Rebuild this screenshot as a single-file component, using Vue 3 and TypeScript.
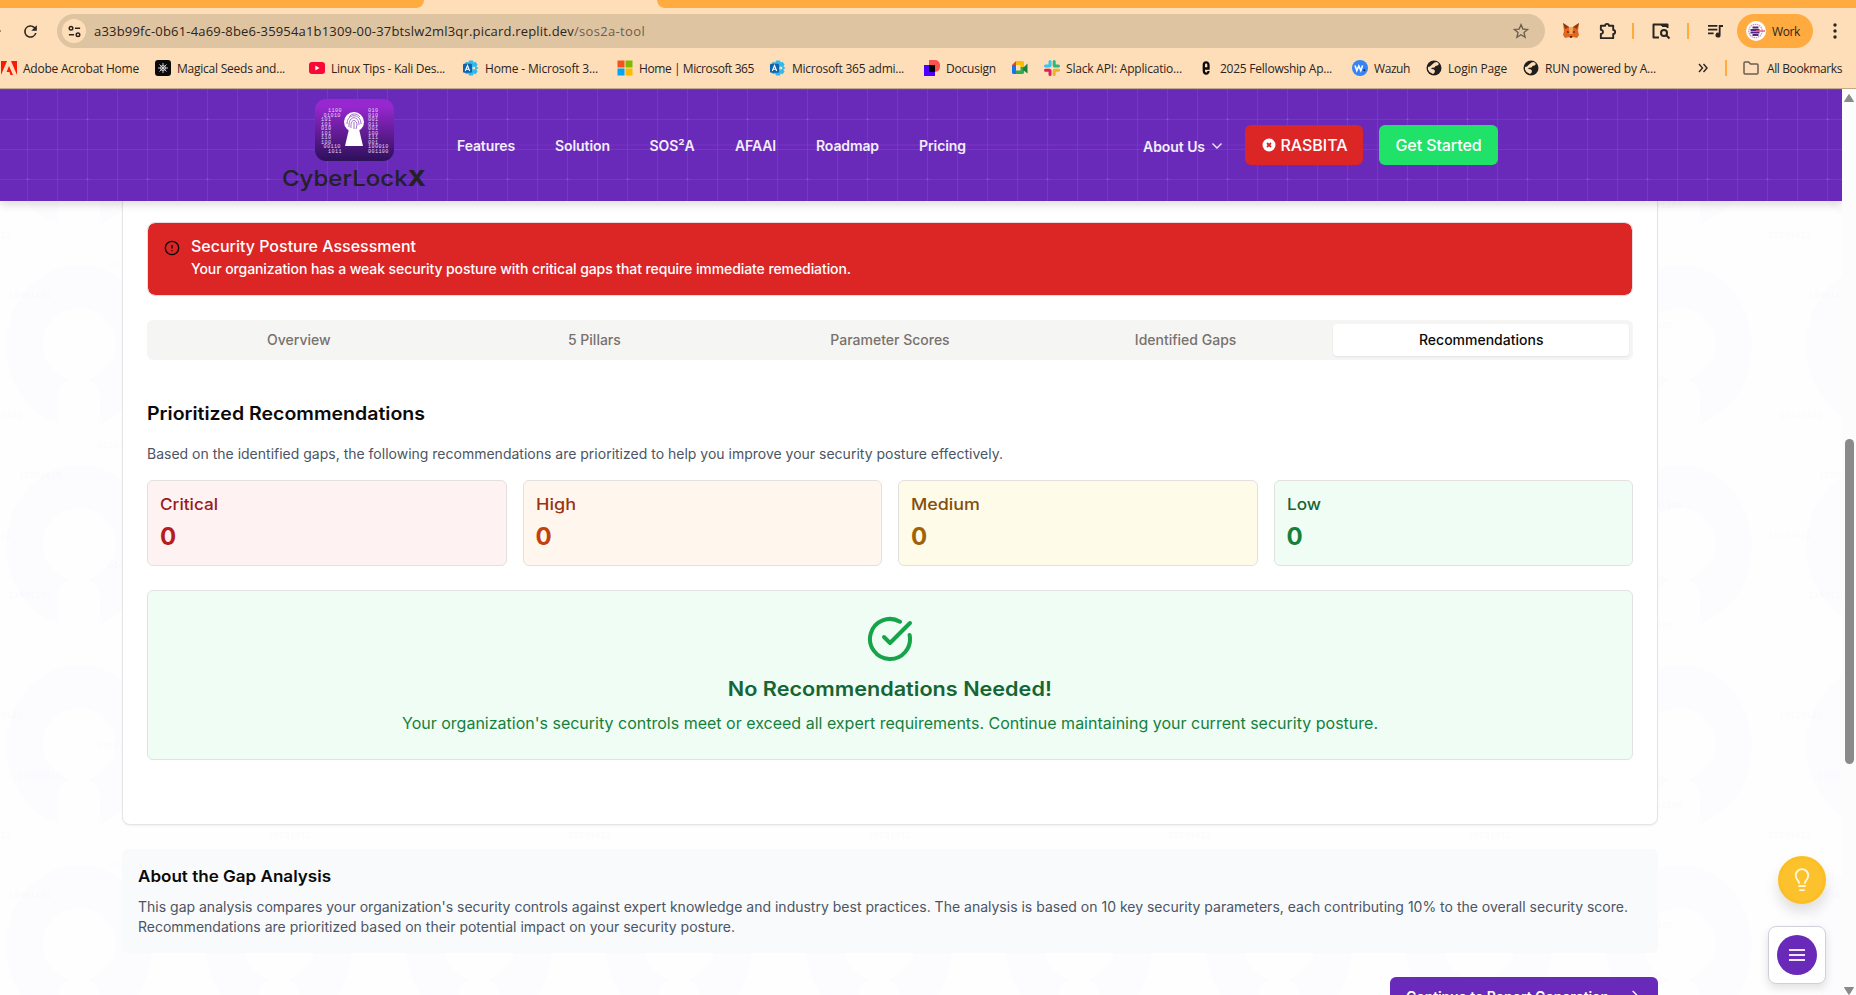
<script setup lang="ts">
import type { Directive } from 'vue'

interface Bookmark {
  icon: string
  label: string
  slot: number
  width: number
}

interface Severity {
  name: string
  count: number
  tone: string
  width: number
}

const bookmarks: Bookmark[] = [
  { icon: 'adobe', label: 'Adobe Acrobat Home', slot: 154, width: 116 },
  { icon: 'seed', label: 'Magical Seeds and...', slot: 154, width: 108 },
  { icon: 'youtube', label: 'Linux Tips - Kali Des...', slot: 154, width: 114 },
  { icon: 'admin', label: 'Home - Microsoft 3...', slot: 154, width: 113 },
  { icon: 'windows', label: 'Home | Microsoft 365', slot: 153, width: 115 },
  { icon: 'admin', label: 'Microsoft 365 admi...', slot: 154, width: 112 },
  { icon: 'docusign', label: 'Docusign', slot: 88, width: 50 },
  { icon: 'meet', label: '', slot: 32, width: 0 },
  { icon: 'slack', label: 'Slack API: Applicatio...', slot: 154, width: 116 },
  { icon: 'letter', label: '2025 Fellowship Ap...', slot: 154, width: 112 },
  { icon: 'wazuh', label: 'Wazuh', slot: 74, width: 36 },
  { icon: 'globe', label: 'Login Page', slot: 97, width: 59 },
  { icon: 'globe', label: 'RUN powered by A...', slot: 160, width: 111 },
]

const navLinks = [
  { label: 'Features', slot: 98, width: 58 },
  { label: 'Solution', slot: 94.5, width: 55 },
  { label: 'SOS²A', slot: 85.5, width: 45 },
  { label: 'AFAAI', slot: 81, width: 41 },
  { label: 'Roadmap', slot: 103, width: 63 },
  { label: 'Pricing', slot: 70, width: 47 },
]

const tabs = ['Overview', '5 Pillars', 'Parameter Scores', 'Identified Gaps', 'Recommendations']
const activeTab = 'Recommendations'

const severities: Severity[] = [
  { name: 'Critical', count: 0, tone: 'critical', width: 58 },
  { name: 'High', count: 0, tone: 'high', width: 40 },
  { name: 'Medium', count: 0, tone: 'medium', width: 69 },
  { name: 'Low', count: 0, tone: 'low', width: 34 },
]

const leftBits = [
  { x: 13, bits: '1100' },
  { x: 8.5, bits: '01010' },
  { x: 6, bits: '101' },
  { x: 6, bits: '101' },
  { x: 6, bits: '010' },
  { x: 6, bits: '101' },
  { x: 6, bits: '110' },
  { x: 6, bits: '100' },
  { x: 8.5, bits: '00110' },
  { x: 13, bits: '1011' },
]
const rightBits = ['010', '010', '001', '011', '001', '100', '111', '001', '100010', '001100']

// Tracks or stretches a label so that it fills its nominal width.
const vFit: Directive<HTMLElement, number> = {
  mounted(el, { value, modifiers }) {
    const natural = el.getBoundingClientRect().width
    const chars = el.textContent?.trim().length ?? 0
    if (!value || !chars || !natural) return
    if (modifiers.stretch) el.style.transform = `scaleX(${value / natural})`
    else el.style.letterSpacing = `${(value - natural) / chars}px`
  },
}
</script>

<template>
  <div class="window">
    <header class="chrome">
      <div class="tabstrip">
        <div class="strip-left"></div>
        <div class="strip-right"></div>
      </div>

      <div class="toolbar">
        <i class="forward-tip"></i>
        <svg class="reload" viewBox="0 0 24 24" width="19" height="19"><path fill="#2b2520" d="M17.65 6.35A8 8 0 1 0 19.73 14h-2.08A6 6 0 1 1 12 6c1.66 0 3.14.69 4.22 1.78L13 11h7V4z" /></svg>
        <div class="omnibox">
          <span class="site-info">
            <svg viewBox="0 0 16 16" width="15" height="15" fill="none" stroke="#2b2520" stroke-width="1.6"><circle cx="4.3" cy="4.5" r="1.9" /><path d="M8.5 4.5H14M2 11.5h5.5" /><circle cx="11.7" cy="11.5" r="1.9" /></svg>
          </span>
          <span class="url"><span v-fit="480">a33b99fc-0b61-4a69-8be6-35954a1b1309-00-37btslw2ml3qr.picard.replit.dev</span><span v-fit="71" class="path">/sos2a-tool</span></span>
          <svg class="star" viewBox="0 0 24 24" width="18" height="18" fill="none" stroke="#6b5e50" stroke-width="1.8"><path d="M12 3.500l2.500 5.900 6.300.5-4.800 4.200 1.500 6.200L12 17l-5.500 3.300L8 14.100 3.200 9.900l6.300-.5z" /></svg>
        </div>
        <svg class="fox" viewBox="0 0 18 18" width="18" height="18"><path fill="#e2661f" d="M1 1l6 4h4l6-4-1 8 1 4-2 3-4-1-1 1H8l-1-1-4 1-2-3 1-4z" /><path fill="#8c3a12" d="M1 1l6 4-4 2zM17 1l-6 4 4 2z" /><path fill="#f5a65b" d="M7 5h4l-.5 7h-3z" /><path fill="#332318" d="M5 9l2.500 1-2 1zM13 9l-2.500 1 2 1zM8 14h2v1.500H8z" /></svg>
        <svg class="puzzle" viewBox="0 0 20 20" width="19" height="20" fill="none" stroke="#2b2520" stroke-width="2"><path d="M3 4.500h4.500a2 2 0 0 1 4 0H16V9a2 2 0 0 1 0 4v4.500H3v-4.300a2.200 2.200 0 0 0 0-4.400z" stroke-linejoin="round" /></svg>
        <i class="sep sep-one"></i>
        <svg class="sidesearch" viewBox="0 0 20 18" width="20" height="18" fill="none" stroke="#2b2520" stroke-width="2"><path d="M8 15.500H2.500v-13h14V6M10 3h7" stroke-linejoin="round" /><path d="M11 2h6v3h-6z" fill="#2b2520" stroke="none" /><circle cx="13" cy="11" r="3" /><path d="M15 13l3.500 3.500" /></svg>
        <i class="sep sep-two"></i>
        <svg class="music" viewBox="0 0 18 16" width="17" height="15"><path fill="#2b2520" d="M1 1h10v1.900H1zM1 5h10v1.900H1zM1 9h6v1.900H1zM12.500 1H17v2.200h-2.600v8.500a2.700 2.700 0 1 1-1.900-2.500z" /></svg>
        <div class="profile">
          <svg viewBox="0 0 20 20" width="20" height="20"><circle cx="10" cy="10" r="10" fill="#fff" /><circle cx="9.500" cy="10" r="6.700" fill="none" stroke="#c98fc4" stroke-width="1.200" stroke-dasharray="1.500 .7" /><path d="M6.500 6.500h6M4.500 9h9M4.500 11.500h9M6.500 14h6" stroke="#54257e" stroke-width="1.900" /><path d="M10 10h9" stroke="#e0647c" stroke-width="1.500" /></svg>
          <span v-fit="28">Work</span>
        </div>
        <svg class="dots" viewBox="0 0 4 16" width="4" height="16" fill="#2b2520"><circle cx="2" cy="2" r="1.700" /><circle cx="2" cy="8" r="1.700" /><circle cx="2" cy="14" r="1.700" /></svg>
      </div>

      <nav class="bookmarks">
        <div v-for="(b, i) in bookmarks" :key="i" class="bookmark" :style="{ width: b.slot + 'px' }">
          <svg viewBox="0 0 16 16" width="16" height="16">
            <template v-if="b.icon === 'adobe'"><path fill="#fa1907" d="M0 1h6L0 15zM10 1h6v14zM8 6l4 9H9.500l-1-3H5.600z" /></template>
            <template v-else-if="b.icon === 'seed'"><rect width="16" height="16" rx="3" fill="#0a0a0a" /><path d="M8 3v10M3 8h10M4.500 4.500l7 7M11.500 4.500l-7 7" stroke="#ddd" stroke-width=".9" /><circle cx="8" cy="8" r="2.600" fill="none" stroke="#ddd" stroke-width=".7" /></template>
            <template v-else-if="b.icon === 'youtube'"><rect y="2" width="16" height="12" rx="3" fill="#fa0736" /><path fill="#fff" d="M6.300 5.500v5l4.200-2.500z" /></template>
            <template v-else-if="b.icon === 'admin'"><path fill="#31b9ee" d="M6 .5h4l.6 2 2-.8 2 3-1.300 1.700L15.500 8l-2.200 1.600 1.300 2-2 2.600-2-.7-.6 2H6l-.7-2-2.300.7-1.800-2.600V4.600l1.800-2.800 2.300.7z" /><rect x="0" y="3.800" width="9" height="9" rx="1.300" fill="#0f63ad" /><path d="M2.300 11l2.200-5.500L6.700 11M3.200 9.300h2.600" stroke="#fff" fill="none" stroke-width="1.100" /><circle cx="10.800" cy="8" r="1.500" fill="#fedeb8" /></template>
            <template v-else-if="b.icon === 'windows'"><path fill="#f6511d" d="M.5.500h7v7h-7z" /><path fill="#7fba00" d="M8.500.500h7v7h-7z" /><path fill="#00a4ef" d="M.5 8.500h7v7h-7z" /><path fill="#ffb900" d="M8.500 8.500h7v7h-7z" /></template>
            <template v-else-if="b.icon === 'docusign'"><path fill="#ff5252" d="M5 0h6a5 5 0 0 1 5 5v2a5 5 0 0 1-5 5H5z" /><path fill="#4c00ff" d="M0 5h11v11H0z" /><path fill="#000" d="M5 5h6v7H5z" /></template>
            <template v-else-if="b.icon === 'meet'"><path fill="#1a73e8" d="M0 5h4v9H1l-1-1z" /><path fill="#ea4335" d="M0 5l4-4v4z" /><path fill="#fbbc04" d="M4 1h7l1 1v5H8.500V5H4z" /><path fill="#34a853" d="M4 10.500h4.500V7H12v6l-1 1H4z" /><path fill="#188038" d="M11 8l4.500-4.500v10L11 10z" /></template>
            <template v-else-if="b.icon === 'slack'"><g stroke-width="3" stroke-linecap="round"><path d="M6 1.500v4M1.500 6h4" stroke="#36c5f0" /><path d="M10.200 1.500v4M10.500 6h4" stroke="#2eb67d" /><path d="M10.200 10.500v4M10.500 10.200h4" stroke="#ecb22e" /><path d="M6 10.500v4M1.500 10.200h4" stroke="#e01e5a" /></g></template>
            <template v-else-if="b.icon === 'letter'"><path d="M5.800 8.500h4.700V5c0-3.500-4.700-3.500-4.700 0v5.500c0 4 4.700 4 4.700.5" fill="none" stroke="#0a0a0a" stroke-width="2.300" /></template>
            <template v-else-if="b.icon === 'wazuh'"><circle cx="8" cy="8" r="8" fill="#3585f7" /><path d="M3 5.500l1.800 5 2-4.500 2 4.500 1.800-5" fill="none" stroke="#fff" stroke-width="1.600" /><circle cx="12.300" cy="10.300" r="1" fill="#14233f" /></template>
            <template v-else><circle cx="8" cy="8" r="7.500" fill="#211f1d" /><path fill="#fedeb8" d="M8.500 2.500l2.500-.5 2 2-1.500 1.500-2 .5-1 1.500L6 7.800 5 9l2.500.3 1.500 1.500-.5 2-1.500 1.200-3.500-2L2 9.500V7l2-.5L5.500 5z" /></template>
          </svg>
          <span v-if="b.label" v-fit="b.width">{{ b.label }}</span>
        </div>
        <svg class="more" viewBox="0 0 10 10" width="10" height="10" fill="none" stroke="#2b2520" stroke-width="1.400"><path d="M1 1l3.500 4L1 9M5.500 1L9 5 5.500 9" /></svg>
        <i class="sep sep-three"></i>
        <svg class="folder" viewBox="0 0 16 14" width="16" height="14" fill="none" stroke="#6b5e50" stroke-width="1.500"><path d="M1 2.200c0-.7.400-1.200 1-1.200h3.700l1.800 2H14c.6 0 1 .5 1 1.100v7.700c0 .7-.4 1.200-1 1.200H2c-.6 0-1-.5-1-1.200z" /></svg>
        <span v-fit="75">All Bookmarks</span>
      </nav>
    </header>

    <div class="viewport">
      <div class="site">
        <svg class="backdrop" width="1842" height="794">
          <defs>
            <pattern id="keyholes" width="200" height="200" x="-21" y="45" patternUnits="userSpaceOnUse">
              <ellipse cx="100" cy="100" rx="73" ry="81" fill="#fcfcfe" />
              <circle cx="100" cy="98" r="36.500" fill="#fefefe" />
              <path d="M79 200v-48q0-13 12-20h18q12 7 12 20v48z" fill="#fefefe" />
            </pattern>
            <pattern id="bits" width="300" height="300" x="0" y="-201" patternUnits="userSpaceOnUse">
              <g font-family="Liberation Mono, monospace" font-size="9" fill="#6929b9" fill-opacity=".022">
                <text x="268" y="238">10101011</text><text x="-32" y="238">10101011</text>
                <text x="8" y="298">11001101</text>
                <text x="279" y="118">10110101</text><text x="-21" y="118">10110101</text>
                <text x="18" y="178">11001010</text>
                <text x="108" y="268">01010110</text>
                <text x="97" y="148">01001101</text>
                <text x="130" y="28">01011100</text>
                <text x="139" y="208">01001100</text>
              </g>
            </pattern>
          </defs>
          <rect width="1842" height="794" fill="url(#keyholes)" />
          <rect width="1842" height="794" fill="url(#bits)" />
        </svg>

        <header class="topbar">
          <svg class="mesh" width="1842" height="112">
            <defs>
              <pattern id="mesh-lines" width="30" height="30" x="27" y="0" patternUnits="userSpaceOnUse"><path d="M.5 0v30M0 .5h30" stroke="#fff" stroke-opacity=".075" /></pattern>
              <pattern id="mesh-dots" width="60" height="60" x="-3" y="0" patternUnits="userSpaceOnUse"><rect x="29.500" y="29" width="2" height="2" fill="#fff" fill-opacity=".09" /></pattern>
              <linearGradient id="mesh-glow"><stop offset="0" stop-color="#8b3bd0" stop-opacity="0" /><stop offset=".5" stop-color="#8b3bd0" stop-opacity=".35" /><stop offset="1" stop-color="#8b3bd0" stop-opacity="0" /></linearGradient>
            </defs>
            <rect width="1842" height="112" fill="url(#mesh-lines)" />
            <rect width="1842" height="112" fill="url(#mesh-dots)" />
            <rect x="92" y="55" width="1658" height="2" fill="url(#mesh-glow)" />
          </svg>
          <div class="brand">
            <svg viewBox="0 0 79 62" width="79" height="62">
              <defs><linearGradient id="badge" x2="0" y2="1"><stop offset=".12" stop-color="#9727cf" /><stop offset="1" stop-color="#2c1059" /></linearGradient></defs>
              <rect width="79" height="62" rx="11" fill="url(#badge)" />
              <g font-family="Liberation Mono, monospace" font-size="5.200" letter-spacing=".35" fill="#e3d3f2">
                <text v-for="(row, i) in leftBits" :key="'l' + i" :x="row.x" :y="13 + i * 4.500">{{ row.bits }}</text>
                <text v-for="(row, i) in rightBits" :key="'r' + i" x="53" :y="13 + i * 4.500">{{ row }}</text>
              </g>
              <path d="M34 30h10l4 17H30z" fill="#fff" /><circle cx="39" cy="23" r="10" fill="#fff" />
              <g fill="none" stroke="#8a4dbb" stroke-width=".8"><path d="M32 25c0-11 14-11 14 0M34 28c-1-12 10-12 10-2M36 29c-1-10 6-9 6-3l-1 4M39 23v7M34 18c3-4 8-4 11 0" /></g>
            </svg>
            <span v-fit.stretch="144" class="wordmark">CyberLock<b>X</b></span>
          </div>
          <nav class="links">
            <a v-for="l in navLinks" :key="l.label" :style="{ width: l.slot + 'px' }"><span v-fit="l.width">{{ l.label }}</span></a>
          </nav>
          <div class="actions">
            <span class="about"><span v-fit="62">About Us</span><svg viewBox="0 0 12 8" width="12" height="8" fill="none" stroke="#f0e9f8" stroke-width="1.400"><path d="M1.500 1.500L6 6l4.500-4.500" /></svg></span>
            <button class="btn danger"><svg viewBox="0 0 14 14" width="14" height="14"><circle cx="7" cy="7" r="6.500" fill="#fff" /><path d="M5 5l4 4M9 5L5 9" stroke="#dc2626" stroke-width="1.800" /></svg><span v-fit="67">RASBITA</span></button>
            <button class="btn start"><span v-fit="86">Get Started</span></button>
          </div>
        </header>

        <main class="content">
          <section class="card">
            <div class="alert">
              <svg viewBox="0 0 24 24" width="16" height="16" fill="none" stroke="#0c0a09" stroke-width="2" stroke-linecap="round"><circle cx="12" cy="12" r="10" /><path d="M12 8v4M12 16h.01" /></svg>
              <div>
                <h5><span v-fit.stretch="225" class="display">Security Posture Assessment</span></h5>
                <p><span v-fit="660">Your organization has a weak security posture with critical gaps that require immediate remediation.</span></p>
              </div>
            </div>

            <div class="tabs">
              <button v-for="t in tabs" :key="t" :class="{ active: t === activeTab }">{{ t }}</button>
            </div>

            <h3 class="section-title"><span v-fit.stretch="278" class="display">Prioritized Recommendations</span></h3>
            <p class="lead"><span v-fit="856">Based on the identified gaps, the following recommendations are prioritized to help you improve your security posture effectively.</span></p>

            <div class="severities">
              <div v-for="s in severities" :key="s.name" class="severity" :class="s.tone">
                <h4><span v-fit.stretch="s.width" class="display">{{ s.name }}</span></h4>
                <p>{{ s.count }}</p>
              </div>
            </div>

            <div class="empty">
              <svg viewBox="0 0 24 24" width="48" height="48" fill="none" stroke="#16a34a" stroke-width="2" stroke-linecap="round" stroke-linejoin="round"><path d="M21.801 10A10 10 0 1 1 17 3.335" /><path d="m9 11 3 3L22 4" /></svg>
              <h3><span v-fit.stretch="324" class="display">No Recommendations Needed!</span></h3>
              <p><span v-fit="976">Your organization's security controls meet or exceed all expert requirements. Continue maintaining your current security posture.</span></p>
            </div>
          </section>

          <section class="about-box">
            <h4><span v-fit.stretch="193" class="display">About the Gap Analysis</span></h4>
            <p>
              <span v-fit="1490">This gap analysis compares your organization's security controls against expert knowledge and industry best practices. The analysis is based on 10 key security parameters, each contributing 10% to the overall security score.</span><br />
              <span v-fit="597">Recommendations are prioritized based on their potential impact on your security posture.</span>
            </p>
          </section>

          <button class="continue">
            <span v-fit="203">Continue to Report Generation</span>
            <svg viewBox="0 0 24 24" width="16" height="16" fill="none" stroke="#fff" stroke-width="2" stroke-linecap="round" stroke-linejoin="round"><path d="M5 12h14M12 5l7 7-7 7" /></svg>
          </button>
        </main>
      </div>

      <aside class="scrollbar">
        <svg class="up" viewBox="0 0 10 8" width="10" height="8"><path d="M5 .5L9.500 7.500h-9z" fill="#8a8a8a" stroke="#8a8a8a" stroke-linejoin="round" /></svg>
        <div class="thumb"></div>
        <svg class="down" viewBox="0 0 10 8" width="10" height="8"><path d="M5 7.500L9.500.5h-9z" fill="#8a8a8a" stroke="#8a8a8a" stroke-linejoin="round" /></svg>
      </aside>
    </div>

    <div class="floating">
      <button class="bulb"><svg viewBox="0 0 24 26" width="22" height="24" fill="none" stroke="#fff7dc" stroke-width="2"><path d="M9 17c0-3-3.800-4.500-3.800-9a6.800 6.800 0 0 1 13.600 0c0 4.500-3.800 6-3.800 9M8 19.500h8M9 24h6" /></svg></button>
      <div class="menu"><button><svg viewBox="0 0 16 14" width="16" height="14" stroke="#f0e8fa" stroke-width="2"><path d="M0 2h16M0 7h16M0 12h16" /></svg></button></div>
    </div>
  </div>
</template>

<style>
html,
body {
  margin: 0;
  overflow: hidden;
  background: #fefefe;
}
</style>

<style scoped>
* {
  box-sizing: border-box;
}
h3, h4, h5, p {
  margin: 0;
}
button {
  border: 0;
  padding: 0;
  font: inherit;
  color: inherit;
}
span {
  white-space: nowrap;
}
svg {
  flex: none;
  display: block;
}
.window {
  position: relative;
  width: 1856px;
  height: 995px;
  overflow: hidden;
  font-family: Inter, 'Liberation Sans', sans-serif;
}
.chrome {
  height: 89px;
  background: #fedeb8;
  border-bottom: 1px solid #c3a98a;
  font-family: 'Open Sans', 'Noto Sans', sans-serif;
  font-size: 12px;
  color: #2b2520;
}
.tabstrip {
  display: flex;
  justify-content: space-between;
  height: 8px;
}
.strip-left {
  width: 424px;
  background: #ffab40;
  border-bottom-right-radius: 8px;
}
.strip-right {
  width: 1199px;
  background: #ffab40;
  border-bottom-left-radius: 8px;
}
.toolbar {
  display: flex;
  align-items: center;
  height: 46px;
}
.forward-tip {
  width: 1px;
  height: 2px;
  background: #a58f78;
}
.reload {
  margin-left: 20px;
}
.omnibox {
  display: flex;
  align-items: center;
  width: 1488px;
  height: 34px;
  margin-left: 17px;
  padding: 0 15px 0 5px;
  border-radius: 17px;
  background: #dfc4a2;
}
.site-info {
  display: grid;
  place-items: center;
  width: 24px;
  height: 24px;
  border-radius: 50%;
  background: #fedeb8;
}
.url {
  display: flex;
  margin-left: 8px;
  font-size: 13px;
}
.path {
  color: #6b5e50;
}
.star {
  margin-left: auto;
}
.fox {
  margin-left: 17px;
}
.puzzle {
  margin-left: 18px;
}
.sep {
  width: 2px;
  height: 16px;
  background: #ffab40;
}
.sep-one {
  margin-left: 15px;
}
.sidesearch {
  margin-left: 17px;
}
.sep-two {
  margin-left: 16px;
}
.music {
  margin-left: 18px;
}
.profile {
  display: flex;
  align-items: center;
  gap: 6px;
  width: 76px;
  height: 34px;
  margin-left: 13px;
  padding-left: 9px;
  border-radius: 17px;
  background: #ffab40;
}
.dots {
  margin-left: 20px;
}
.bookmarks {
  display: flex;
  align-items: center;
  height: 28px;
  padding-left: 1px;
}
.bookmark {
  display: flex;
  align-items: center;
  flex: none;
  gap: 6px;
}
.more {
  margin-left: 15px;
}
.sep-three {
  margin-left: 17px;
}
.folder {
  margin: 0 8px 0 16px;
}
.viewport {
  display: flex;
  height: 906px;
}
.site {
  position: relative;
  width: 1842px;
  overflow: hidden;
}
.backdrop {
  position: absolute;
  top: 112px;
  left: 0;
}
.topbar {
  position: relative;
  z-index: 2;
  display: flex;
  height: 112px;
  background: #6929b9;
  color: #f3edfa;
  box-shadow: 0 4px 8px rgba(0, 0, 0, 0.13);
}
.mesh {
  position: absolute;
  top: 0;
  left: 0;
}
.brand {
  position: relative;
  display: flex;
  flex-direction: column;
  align-items: center;
  width: 144px;
  margin-left: 282px;
  padding-top: 10px;
}
.wordmark {
  margin-top: 3px;
  color: #242128;
  font-size: 22px;
  font-weight: 500;
  line-height: 28px;
}
.wordmark b {
  font-weight: 800;
}
.links {
  position: relative;
  display: flex;
  align-items: center;
  margin-left: 31px;
  font-size: 14px;
  font-weight: 600;
}
.links a {
  flex: none;
}
.actions {
  position: relative;
  display: flex;
  align-items: center;
  margin-left: 154px;
}
.about {
  display: flex;
  align-items: center;
  gap: 6px;
  width: 102px;
  padding-top: 2px;
  font-size: 14px;
  font-weight: 600;
}
.btn {
  display: flex;
  align-items: center;
  justify-content: center;
  gap: 5px;
  height: 40px;
  border-radius: 6px;
  color: #fff;
  font-size: 16px;
  font-weight: 500;
}
.danger {
  width: 118px;
  padding-left: 1px;
  background: #dc2626;
}
.start {
  width: 119px;
  margin-left: 16px;
  background: #20e268;
}
.content {
  position: relative;
  display: flex;
  flex-direction: column;
  width: 1536px;
  margin-left: 122px;
}
.card {
  height: 624px;
  padding: 21px 24px 0;
  border: 1px solid #e5e5e5;
  border-top: 0;
  border-radius: 0 0 8px 8px;
  background: #fff;
  box-shadow: 0 1px 2px rgba(0, 0, 0, 0.06);
}
.alert {
  display: flex;
  height: 74px;
  gap: 11px;
  padding: 15px 16px;
  border: 1px solid #eadcdc;
  border-radius: 8px;
  background: #dc2626;
  background-clip: padding-box;
  color: #fff;
}
.alert svg {
  margin-top: 2px;
}
.alert h5 {
  font-size: 16px;
  font-weight: 500;
  line-height: 16px;
}
.alert p {
  margin-top: 4px;
  font-size: 14px;
  font-weight: 500;
  line-height: 22px;
}
.display {
  display: inline-block;
  transform-origin: left center;
}
.tabs {
  display: grid;
  grid-template-columns: repeat(5, 1fr);
  height: 40px;
  margin-top: 24px;
  padding: 4px;
  border-radius: 6px;
  background: #f5f5f4;
  color: #78716c;
  font-size: 14px;
  font-weight: 500;
}
.tabs button {
  padding-bottom: 2px;
  border-radius: 4px;
  background: none;
}
.tabs .active {
  background: #fff;
  color: #0c0a09;
  box-shadow: 0 1px 2px rgba(0, 0, 0, 0.08);
}
.section-title {
  margin-top: 40px;
  font-size: 18px;
  font-weight: 600;
  line-height: 28px;
  color: #0c0a09;
}
.lead {
  margin-top: 16px;
  color: #4b5563;
  font-size: 14px;
  line-height: 20px;
}
.severities {
  display: grid;
  grid-template-columns: repeat(4, 1fr);
  gap: 16px;
  margin-top: 16px;
}
.severity {
  height: 86px;
  padding: 11px 12px;
  border: 1px solid #e3e1e0;
  border-radius: 6px;
}
.severity h4 {
  font-size: 16px;
  font-weight: 500;
  line-height: 24px;
}
.severity p {
  margin-top: 5px;
  font-size: 24px;
  font-weight: 700;
  line-height: 32px;
}
.critical { background: #fef2f2; color: #991b1b; }
.critical p { color: #b91c1c; }
.high { background: #fff7ed; color: #9a3412; }
.high p { color: #c2410c; }
.medium { background: #fefce8; color: #854d0e; }
.medium p { color: #a16207; }
.low { background: #f0fdf4; color: #166534; }
.low p { color: #15803d; }
.empty {
  display: flex;
  flex-direction: column;
  align-items: center;
  height: 170px;
  margin-top: 24px;
  padding-top: 24px;
  border: 1px solid #e0e3e1;
  border-radius: 6px;
  background: #f0fdf4;
  color: #15803d;
}
.empty h3 {
  margin-top: 12px;
  color: #166534;
  font-size: 20px;
  font-weight: 600;
  line-height: 28px;
}
.empty h3 .display {
  transform-origin: center;
}
.empty p {
  margin-top: 8px;
  font-size: 16px;
  line-height: 24px;
}
.about-box {
  height: 104px;
  margin-top: 24px;
  padding: 15px 16px;
  border-radius: 6px;
  background: #f9fafc;
}
.about-box h4 {
  font-size: 16px;
  font-weight: 600;
  line-height: 24px;
  color: #0c0a09;
}
.about-box p {
  margin-top: 9px;
  color: #4b5563;
  font-size: 14px;
  line-height: 20px;
}
.continue {
  display: flex;
  align-items: center;
  align-self: flex-end;
  gap: 16px;
  width: 268px;
  height: 40px;
  margin-top: 24px;
  padding: 0 0 2px 16px;
  border-radius: 6px;
  background: #6929b9;
  color: #fff;
  font-size: 14px;
  font-weight: 600;
}
.scrollbar {
  display: flex;
  flex-direction: column;
  align-items: flex-end;
  width: 14px;
  padding: 5px 2px 0 0;
  background: #fcfcfc;
}
.thumb {
  width: 9px;
  height: 327px;
  margin-top: 337px;
  border-radius: 5px;
  background: #8a8a8a;
}
.down {
  margin-top: 223px;
}
.floating {
  position: absolute;
  right: 30px;
  top: 856px;
  display: flex;
  flex-direction: column;
  align-items: flex-end;
  gap: 22px;
}
.bulb {
  display: grid;
  place-items: center;
  width: 48px;
  height: 48px;
  border-radius: 50%;
  background: #fcc22d;
  border: 3px solid #fbbf24;
  box-shadow: 0 8px 14px rgba(0, 0, 0, 0.13);
}
.menu {
  display: grid;
  place-items: center;
  width: 58px;
  height: 58px;
  border: 1px solid #d1d0dc;
  border-radius: 8px;
  background: #fff;
  box-shadow: 0 4px 10px rgba(0, 0, 0, 0.12);
}
.menu button {
  display: grid;
  place-items: center;
  width: 40px;
  height: 40px;
  border-radius: 50%;
  background: #6929b9;
}
</style>
